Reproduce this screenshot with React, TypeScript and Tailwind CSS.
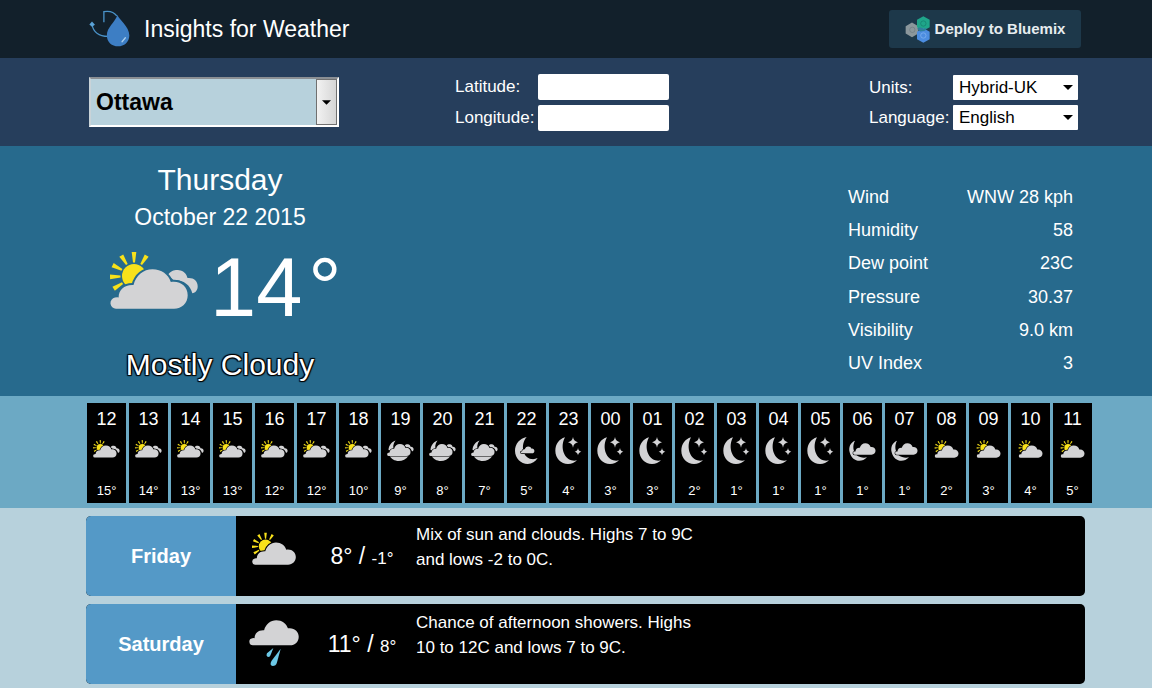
import React from "react";

type IconKind =
  | "mostlyCloudyDay"
  | "partlyCloudyDay"
  | "mostlyCloudyNight"
  | "mostlyClearNight"
  | "clearNight"
  | "partlyCloudyNight";

type Hour = { hour: string; temp: number; icon: IconKind };

const HOURS: Hour[] = [
  { hour: "12", temp: 15, icon: "mostlyCloudyDay" },
  { hour: "13", temp: 14, icon: "mostlyCloudyDay" },
  { hour: "14", temp: 13, icon: "mostlyCloudyDay" },
  { hour: "15", temp: 13, icon: "mostlyCloudyDay" },
  { hour: "16", temp: 12, icon: "mostlyCloudyDay" },
  { hour: "17", temp: 12, icon: "mostlyCloudyDay" },
  { hour: "18", temp: 10, icon: "mostlyCloudyDay" },
  { hour: "19", temp: 9, icon: "mostlyCloudyNight" },
  { hour: "20", temp: 8, icon: "mostlyCloudyNight" },
  { hour: "21", temp: 7, icon: "mostlyCloudyNight" },
  { hour: "22", temp: 5, icon: "mostlyClearNight" },
  { hour: "23", temp: 4, icon: "clearNight" },
  { hour: "00", temp: 3, icon: "clearNight" },
  { hour: "01", temp: 3, icon: "clearNight" },
  { hour: "02", temp: 2, icon: "clearNight" },
  { hour: "03", temp: 1, icon: "clearNight" },
  { hour: "04", temp: 1, icon: "clearNight" },
  { hour: "05", temp: 1, icon: "clearNight" },
  { hour: "06", temp: 1, icon: "partlyCloudyNight" },
  { hour: "07", temp: 1, icon: "partlyCloudyNight" },
  { hour: "08", temp: 2, icon: "partlyCloudyDay" },
  { hour: "09", temp: 3, icon: "partlyCloudyDay" },
  { hour: "10", temp: 4, icon: "partlyCloudyDay" },
  { hour: "11", temp: 5, icon: "partlyCloudyDay" },
];

const CONDITIONS: [string, string][] = [
  ["Wind", "WNW 28 kph"],
  ["Humidity", "58"],
  ["Dew point", "23C"],
  ["Pressure", "30.37"],
  ["Visibility", "9.0 km"],
  ["UV Index", "3"],
];

const CLOUD =
  "M6 57.7 A5.6 5.6 0 0 1 5 46.6 Q7 46 8.6 46.4 C8.8 38.5 14.5 33.4 23.5 34 C26 24.5 33.5 18.3 42.5 18.3 C51.5 18.3 58.5 23.5 60.8 31 C70.5 29.5 77.7 35.5 77.7 44.2 C77.7 52 71.8 57.7 64 57.7 Z";

function Cloud({ gap }: { gap?: string }) {
  return (
    <g>
      {gap && <path d={CLOUD} fill={gap} stroke={gap} strokeWidth="4" />}
      <path d={CLOUD} fill="#d3d3d5" />
    </g>
  );
}

function BackCloud() {
  return (
    <path
      d="M58 24 C61 19.5 65 18.8 69 19.2 C73.5 19.8 76.5 22.5 77.5 27 C83.500 26.3 87.7 30 87.7 35.2 C87.7 39 85.5 41.8 82.3 42.3 C80.5 34 73 28.5 63.5 29 Z"
      fill="#d3d3d5"
    />
  );
}

function Sun() {
  return (
    <g fill="#f8e11a">
      <circle cx="24" cy="25" r="12" />
      {[-90, -122, -153, 178, 148, -58].map((angle) => (
        <path
          key={angle}
          transform={`translate(24 25) rotate(${angle})`}
          d="M13.5 -1 L24 -2.3 L24 2.3 L13.5 1 Z"
        />
      ))}
    </g>
  );
}

function HourIcon({ kind }: { kind: IconKind }) {
  return (
    <svg viewBox="0 0 117 90" className="mt-1 h-[30px] w-full" aria-hidden="true">
      {kind === "mostlyCloudyDay" && (
        <g transform="translate(18 15) scale(.91)">
          <Sun />
          <BackCloud />
          <Cloud gap="#000" />
        </g>
      )}
      {kind === "partlyCloudyDay" && (
        <g transform="translate(23 15) scale(.92)">
          <Sun />
          <Cloud gap="#000" />
        </g>
      )}
      {kind === "mostlyCloudyNight" && (
        <g transform="translate(18 10.5) scale(.91)">
          <path d="M28 7 C14 12 6 24 5 38 L24 44 C18 30 20 17 28 7 Z" fill="#d3d3d5" />
          <path d="M8 56 C18 78 54 82 72 56 Z" fill="#d3d3d5" />
          <BackCloud />
          <Cloud gap="#000" />
        </g>
      )}
      {kind === "mostlyClearNight" && (
        <g>
          <path d="M59 6 C38 10 24 27 24 47 C24 69 42 87 62 87 C75 87 85 80 92 69 C86 72 79 73 73 72 C49 69 38 31 59 6 Z" fill="#d3d3d5" />
          <g transform="translate(41 24.5) scale(.53)">
            <path d={CLOUD} fill="#d3d3d5" stroke="#000" strokeWidth="7" />
            <path d={CLOUD} fill="#d3d3d5" />
          </g>
        </g>
      )}
      {kind === "clearNight" && (
        <g fill="#d3d3d5">
          <path d="M48 7 C30 12 19 28 19 47 C19 69 36 87 57 87 C68 87 77 83 84 76 C78 78 73 78 67 76 C43 69 33 33 48 7 Z" />
          <path d="M72 6 Q74 19 87 22 Q74 25 72 38 Q70 25 57 22 Q70 19 72 6 Z" />
          <path d="M87 39 Q88.500 48.500 97 50 Q88.500 51.500 87 61 Q85.500 51.500 77 50 Q85.500 48.500 87 39 Z" />
        </g>
      )}
      {kind === "partlyCloudyNight" && (
        <g>
          <path d="M36 17 C22 23 16 36 20 52 C27 80 55 85 72 67 C62 69 50 68 40 60 C30 48 28 31 36 17 Z" fill="#d3d3d5" />
          <g transform="translate(30 9) scale(.87)">
            <Cloud gap="#000" />
          </g>
        </g>
      )}
    </svg>
  );
}

function DropLogo() {
  return (
    <svg viewBox="0 0 124 112" className="mb-0.5 h-[37px] w-[41px]" aria-hidden="true">
      <path d="M45 37 V5 C62 2 76 7 84 18" fill="none" stroke="#4a93c9" strokeWidth="4" />
      <path d="M9 43 C12 66 30 80 58 80" fill="none" stroke="#4a93c9" strokeWidth="4" />
      <path d="M1 44 L9 35 L18 45 L9 51 Z" fill="#5aa3d8" />
      <path d="M86 15 C90 28 122 50 122 77 C122 97 106 110 88 110 C69 110 54 97 54 77 C54 52 78 38 86 15 Z" fill="#3d7ec4" />
      <path d="M110 84 L100 96" fill="none" stroke="#a9cdec" strokeWidth="4" strokeLinecap="round" />
    </svg>
  );
}

function HexLogo() {
  const hex = "M0 -22 L19 -11 V11 L0 22 L-19 11 V-11 Z";
  return (
    <svg viewBox="0 0 78 80" className="h-[27px] w-[26px]" aria-hidden="true">
      <path d={hex} transform="translate(21 41)" fill="#8b979c" />
      <path d={hex} transform="translate(55 22)" fill="#1fa58a" />
      <path d={hex} transform="translate(55 58)" fill="#4c8de0" />
      <path d="M36 38 L45 33 L55 37 L66 36 L60 44 L46 46 Z" fill="#2f7f9c" />
      <g fill="none" strokeWidth="2">
        <circle cx="22" cy="41" r="8" stroke="#6d7a80" />
        <circle cx="55" cy="22" r="8" stroke="#137c6b" />
        <circle cx="55" cy="58" r="8" stroke="#86b6f2" />
      </g>
    </svg>
  );
}

function SmallSelect({ id, options }: { id: string; options: string[] }) {
  return (
    <div className="relative">
      <select id={id} className="block h-[25px] w-[125px] appearance-none rounded-[1px] bg-white pl-1.5 text-[17px] leading-[25px] text-black">
        {options.map((o) => (
          <option key={o}>{o}</option>
        ))}
      </select>
      <svg viewBox="0 0 10 5" className="pointer-events-none absolute top-[10px] right-[5px] h-[5px] w-[10px]" aria-hidden="true">
        <path d="M0 0 H10 L5 5 Z" fill="#000" />
      </svg>
    </div>
  );
}

function DayCard(props: { day: string; icon: React.ReactNode; high: number; low: number; text: string }) {
  return (
    <article className="flex min-h-20 overflow-hidden rounded-[5px] bg-black">
      <h2 className="flex w-[150px] shrink-0 items-center justify-center bg-[#5499c7] text-xl font-bold">{props.day}</h2>
      <div className="flex w-[76px] shrink-0 items-start justify-center pt-4">{props.icon}</div>
      <p className="w-[100px] shrink-0 pt-6 text-center text-[23px] leading-8">
        {props.high}° / <span className="text-[17px]">{props.low}°</span>
      </p>
      <p className="ml-1 max-w-[290px] pt-1.5 text-[17px] leading-[25px]">{props.text}</p>
    </article>
  );
}

export default function App() {
  return (
    <div className="min-h-screen bg-[#b7d1dc] font-['Liberation_Sans',Arial,sans-serif] text-white">
      <header className="flex min-h-[58px] items-center bg-[#12202b] pr-[71px] pl-[89px]">
        <DropLogo />
        <h1 className="ml-3.5 text-[23px] leading-8">Insights for Weather</h1>
        <button type="button" className="ml-auto flex h-[38px] w-[192px] items-center justify-center gap-1 rounded-[3px] bg-[#1d384a] text-[15px] font-bold text-[#e6ecef]">
          <HexLogo />
          Deploy to Bluemix
        </button>
      </header>

      <form className="flex bg-[#263e5c] pt-4 pr-[74px] pb-[15px] pl-[89px]">
        <div className="relative mt-[3px]">
          <select aria-label="City" className="block h-[50px] w-[250px] appearance-none border-2 border-t-[#8b8f94] border-r-white border-b-white border-l-[#c9d3d8] bg-[#b7d1dc] pl-[5px] text-[23px] font-bold text-black">
            <option>Ottawa</option>
          </select>
          <span className="pointer-events-none absolute top-[2px] right-[2px] flex h-[46px] w-[21px] items-center justify-center border border-[#707070] bg-linear-to-r from-[#f2f2f2] to-[#d6d6d6]">
            <svg viewBox="0 0 10 5" className="h-[5px] w-[9px]" aria-hidden="true">
              <path d="M0 0 H10 L5 5 Z" fill="#000" />
            </svg>
          </span>
        </div>
        <div className="ml-[116px] grid grid-cols-[83px_131px] items-center gap-y-[5px] self-start text-[17px]">
          <label htmlFor="lat" className="leading-[26px]">Latitude:</label>
          <input id="lat" className="h-[26px] rounded-[2px] bg-white px-1 text-black" />
          <label htmlFor="lon" className="leading-[26px]">Longitude:</label>
          <input id="lon" className="h-[26px] rounded-[2px] bg-white px-1 text-black" />
        </div>
        <div className="mt-px ml-auto grid grid-cols-[84px_125px] items-center gap-y-[5px] self-start text-[17px]">
          <label htmlFor="units" className="leading-[25px]">Units:</label>
          <SmallSelect id="units" options={["Hybrid-UK", "Metric", "English"]} />
          <label htmlFor="lang" className="leading-[25px]">Language:</label>
          <SmallSelect id="lang" options={["English", "Français"]} />
        </div>
      </form>

      <section className="flex justify-between bg-[#276a8d] pr-[79px] pb-[11px] pl-[86px]">
        <div className="w-[268px] pt-4 text-center">
          <p className="text-[30px] leading-9">Thursday</p>
          <p className="text-[23px] leading-[38px]">October 22 2015</p>
          <div className="flex h-[100px] items-center pl-6">
            <svg viewBox="0 0 88 58" className="-mt-3 h-[58px] w-[88px] shrink-0" aria-hidden="true">
              <Sun />
              <BackCloud />
              <Cloud gap="#276a8d" />
            </svg>
            <p className="ml-3 flex gap-1.5 pt-1 text-[83px] leading-[96px]">
              <span>14</span>
              <span>°</span>
            </p>
          </div>
          <p className="mt-[9px] text-[30px] leading-10 [text-shadow:1px_1px_1px_#000,-1px_1px_1px_#000,1px_-1px_1px_#000,-1px_-1px_1px_#000]">Mostly Cloudy</p>
        </div>
        <table className="mt-[34px] h-[200px] w-[225px] text-[18px] leading-6">
          <tbody>
            {CONDITIONS.map(([name, value]) => (
              <tr key={name}>
                <th scope="row" className="p-0 text-left font-normal">{name}</th>
                <td className="p-0 text-right">{value}</td>
              </tr>
            ))}
          </tbody>
        </table>
      </section>

      <section className="overflow-hidden bg-[#6ca9c4] pt-[7px] pr-[60px] pb-[5px] pl-[87px]">
        <ol className="grid grid-cols-[repeat(24,minmax(39px,1fr))] gap-[3px]">
          {HOURS.map((h) => (
            <li key={h.hour} className="bg-black pt-1 pb-0.5 text-center">
              <p className="text-lg leading-6">{h.hour}</p>
              <HourIcon kind={h.icon} />
              <p className="mt-4 text-[13px] leading-5">{h.temp}°</p>
            </li>
          ))}
        </ol>
      </section>

      <section className="flex flex-col gap-2 pt-2 pr-[67px] pl-[86px]">
        <DayCard
          day="Friday"
          high={8}
          low={-1}
          text="Mix of sun and clouds. Highs 7 to 9C and lows -2 to 0C."
          icon={
            <svg viewBox="0 0 78 58" className="h-[33px] w-11" aria-hidden="true">
              <Sun />
              <Cloud gap="#000" />
            </svg>
          }
        />
        <DayCard
          day="Saturday"
          high={11}
          low={8}
          text="Chance of afternoon showers. Highs 10 to 12C and lows 7 to 9C."
          icon={
            <svg viewBox="0 18 78 72" className="h-[46px] w-[50px]" aria-hidden="true">
              <Cloud />
              <path d="M38 62 L28 70 Q26 75 30 76 Q33 76 34 72 Z" fill="#6cc8e6" />
              <path d="M49.500 63 L35 82 Q31.500 89 37 90 Q42 90 43.500 85 Z" fill="#6cc8e6" />
            </svg>
          }
        />
      </section>
    </div>
  );
}
